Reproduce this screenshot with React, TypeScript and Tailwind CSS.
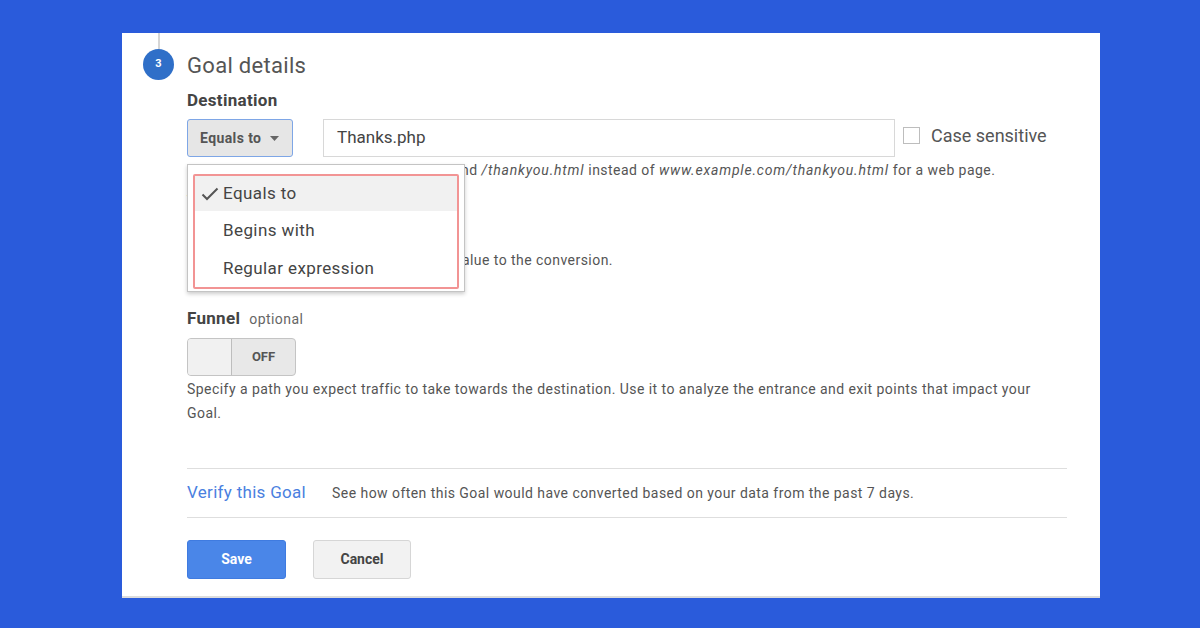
import React from "react";

export default function App() {
  return (
    <div
      className="w-[1200px] h-[628px] bg-[#2a5bdb] pt-[33px] pl-[122px] overflow-hidden"
      style={{ fontFamily: "Roboto, 'Liberation Sans', Arial, sans-serif" }}
    >
      <div className="w-[978px] h-[565px] bg-white border-b-2 border-[#dcdcdc] flex relative">
        {/* left rail */}
        <div className="w-[65px] flex flex-col items-start">
          <div className="ml-[36px] w-[2px] h-[16px] bg-[#d6d6d6]" />
          <div className="ml-[21px] w-[31px] h-[31px] rounded-full bg-[#2f6fc8] flex items-center justify-center text-white text-[11px] font-bold">
            3
          </div>
        </div>

        {/* content */}
        <div className="w-[880px] pt-[19px] text-[#555]">
          <div className="text-[22px] leading-[28px] tracking-[0.3px] text-[#555]">Goal details</div>
          <div className="mt-[10px] text-[17px] leading-[20px] tracking-[0.3px] font-bold text-[#444]">Destination</div>

          <div className="relative mt-[9px]">
            <div className="flex items-center h-[38px]">
              <div className="w-[106px] h-[38px] rounded-[3px] border border-[#7ea6e6] bg-[#e6e6e6] flex items-center pl-[12px] gap-[9px]">
                <span className="text-[14px] tracking-[0.4px] font-bold text-[#555]">Equals to</span>
                <svg width="9" height="5" viewBox="0 0 9 5">
                  <path d="M0 0 L9 0 L4.5 5 Z" fill="#666" />
                </svg>
              </div>
              <div className="ml-[30px] w-[572px] h-[38px] border border-[#d8d8d8] flex items-center pl-[13px] text-[17px] text-[#444]">
                Thanks.php
              </div>
              <div className="flex items-center -mt-[5px]">
                <div className="ml-[8px] w-[17px] h-[17px] border border-[#bdbdbd] bg-white" />
                <span className="ml-[11px] text-[18px] text-[#555]">Case sensitive</span>
              </div>
            </div>

            {/* dropdown menu */}
            <div className="absolute left-0 top-[45px] w-[278px] h-[128px] bg-white border border-[#c4c4c4] shadow-[0_2px_4px_rgba(0,0,0,0.2)] z-10 px-[5px] pt-[9px] pb-[2px]">
              <div className="h-full border-2 border-[#f29494] rounded-[2px] flex flex-col">
                <div className="h-[36px] bg-[#f1f1f1] flex items-center pl-[6px] text-[17px] tracking-[0.4px] text-[#444]">
                  <svg width="18" height="14" viewBox="0 0 18 14" className="mr-[4px]">
                    <path d="M1.5 7.5 L6 12 L16.5 1.5" fill="none" stroke="#555" strokeWidth="2" />
                  </svg>
                  Equals to
                </div>
                <div className="h-[40px] flex items-center pl-[28px] text-[17px] tracking-[0.4px] text-[#444]">Begins with</div>
                <div className="h-[38px] flex items-center pl-[28px] text-[17px] tracking-[0.4px] text-[#444]">Regular expression</div>
              </div>
            </div>
          </div>

          <div className="mt-[4px] text-[14px] leading-[18px] tracking-[0.45px] text-[#555] whitespace-nowrap">
            For example, use My Screen for the app and <i className="tracking-[0.8px]">/thankyou.html</i> instead of{" "}
            <i className="tracking-[0.8px]">www.example.com/thankyou.html</i> for a web page.
          </div>

          {/* Value section (mostly hidden by dropdown) */}
          <div className="mt-[12px] text-[17px] leading-[20px] font-bold text-[#444]">
            Value <span className="text-[14px] font-normal text-[#666]">optional</span>
          </div>
          <div className="mt-[29px] flex items-center h-[38px]">
            <div className="w-[109px] h-[38px] rounded-[4px] border border-[#c8c8c8] bg-[#e6e6e6]" />
            <span className="ml-[31px] text-[14px] tracking-[0.45px] text-[#555] whitespace-nowrap">
              Assign a monetary value to the conversion.
            </span>
          </div>

          <div className="mt-[29px] flex items-baseline gap-[9px]">
            <span className="text-[17px] leading-[20px] tracking-[0.3px] font-bold text-[#444]">Funnel</span>
            <span className="text-[14px] tracking-[0.45px] text-[#666]">optional</span>
          </div>
          <div className="mt-[8px] w-[109px] h-[38px] rounded-[4px] border border-[#c4c4c4] bg-[#e8e8e8] flex overflow-hidden">
            <div className="w-[44px] h-full bg-[#f1f1f1] border-r border-[#bdbdbd]" />
            <div className="flex-1 flex items-center justify-center text-[13px] font-bold text-[#555]">OFF</div>
          </div>
          <div className="mt-[1px] text-[14px] leading-[24px] tracking-[0.45px] text-[#555] whitespace-nowrap">
            Specify a path you expect traffic to take towards the destination. Use it to analyze the entrance and exit points that impact your
            <br />
            Goal.
          </div>

          <div className="mt-[43px] border-t border-[#dedede] h-[49px] flex items-center">
            <span className="text-[17px] tracking-[0.3px] text-[#4a7fe0]">Verify this Goal</span>
            <span className="ml-[26px] text-[14px] tracking-[0.45px] text-[#555] whitespace-nowrap">
              See how often this Goal would have converted based on your data from the past 7 days.
            </span>
          </div>
          <div className="border-t border-[#dedede]" />

          <div className="mt-[22px] flex gap-[27px]">
            <div className="w-[99px] h-[39px] rounded-[3px] bg-[#4a86e8] border border-[#3f7be0] flex items-center justify-center text-[14px] font-bold text-white">
              Save
            </div>
            <div className="w-[98px] h-[39px] rounded-[3px] bg-[#f2f2f2] border border-[#d6d6d6] flex items-center justify-center text-[14px] font-bold text-[#444]">
              Cancel
            </div>
          </div>
        </div>
      </div>
    </div>
  );
}
